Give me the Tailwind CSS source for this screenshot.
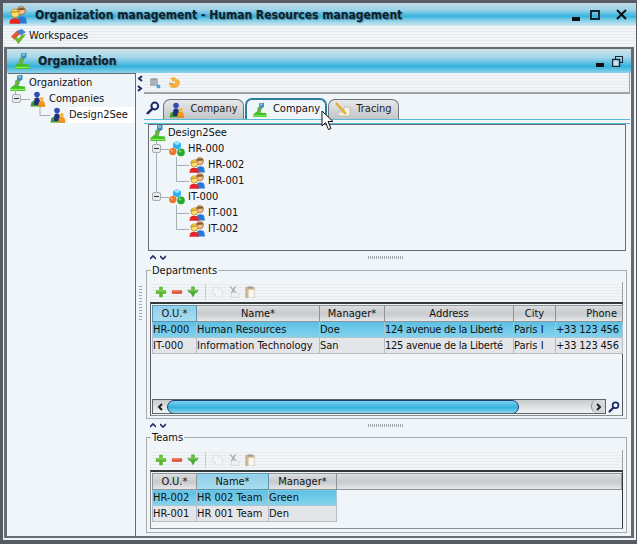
<!DOCTYPE html>
<html lang="en">
<head>
  <meta charset="UTF-8">
  <title>Organization management</title>
  <script src="https://cdn.jsdelivr.net/npm/@tailwindcss/browser@4"></script>
</head>
<body class="w-[637px] h-[544px] overflow-hidden bg-[#eef3f7] font-['DejaVu_Sans_Condensed','DejaVu_Sans',sans-serif] text-[11px] text-[#111]">

  <!-- icon sprites -->
  <svg width="0" height="0" class="absolute">
    <defs>
      <symbol id="org" viewBox="0 0 16 18">
        <path d="M0.5 14 L4 11 L7 11 L9 12 L15 12.5 L15.5 17 L0.5 17 Z" fill="#3fc02a"/>
        <path d="M1 15.5 L15 15.5" stroke="#8dea50" stroke-width="1.4"/>
        <path d="M4.5 12 L5.5 6 L9 5 L10 8 L8.5 12 Z" fill="#6bb04a"/>
        <path d="M7 1.5 L12.5 .8 L12.5 5.5 L9.5 7.5 L7 5.5 Z" fill="#3f8fb8"/>
        <path d="M8 2 L11 1.8 L11 3.6 L8.5 4 Z" fill="#8fc8e0"/>
      </symbol>
      <symbol id="comp" viewBox="0 0 16 16">
        <path d="M.5 15.5 L1.5 11 L5 9 L10 9 L10 15.5 Z" fill="#3f9c28"/>
        <circle cx="7" cy="3.6" r="2.8" fill="#2e4fb0"/>
        <path d="M4 14 L4.5 7.5 Q7 5.5 9.5 7.5 L9.5 14 Z" fill="#1f2f86"/>
        <path d="M8 15.5 L9 11 Q11.5 8.5 14.5 11 L15.5 15.5 Z" fill="#f39a1e"/>
        <circle cx="11.8" cy="8" r="2" fill="#f8b43c"/>
        <path d="M9 15 L15 15" stroke="#d8781a"/>
      </symbol>
      <symbol id="sph" viewBox="0 0 16 16">
        <path d="M8 .3 L12 2.3 L12 6.6 L8 8.6 L4 6.6 L4 2.3 Z" fill="#2fb6ee"/>
        <path d="M8 .8 L11 2.4 L8 4 L5 2.4 Z" fill="#a5e6fa"/>
        <circle cx="3.8" cy="10.6" r="3.7" fill="#ee7428"/>
        <circle cx="2.8" cy="9.4" r="1.2" fill="#f8b078"/>
        <circle cx="12" cy="11.4" r="3.8" fill="#26a834"/>
        <circle cx="11" cy="10.2" r="1.2" fill="#78d880"/>
      </symbol>
      <symbol id="team" viewBox="0 0 16 16">
        <circle cx="10.8" cy="4.2" r="3.6" fill="#eec08a" stroke="#8a5a2a" stroke-width=".7"/>
        <path d="M7.2 3 Q10.5 .2 14.3 2.6 L14.3 3.4 L7.4 4 Z" fill="#8a5526"/>
        <path d="M7 15.5 L8 10.5 Q11.5 8 15 10.5 L16 15.5 Z" fill="#2a78d4"/>
        <circle cx="5.4" cy="6.4" r="3.6" fill="#fbdc6e" stroke="#b98518" stroke-width=".7"/>
        <path d="M1.8 5.6 L9 4.8" stroke="#c98a18" stroke-width="1.1"/>
        <path d="M.3 15.7 L1.3 12 Q5 9.6 9 12 L10 15.7 Z" fill="#e42626"/>
      </symbol>
      <symbol id="plus" viewBox="0 0 14 14">
        <path d="M5 1 H9 V5 H13 V9 H9 V13 H5 V9 H1 V5 H5 Z" fill="#55b32f"/>
        <path d="M2 6 H12 M7 2 V6" stroke="#96dc68"/>
      </symbol>
      <symbol id="minus" viewBox="0 0 14 14">
        <rect x="1" y="5" width="12" height="4" rx="1" fill="#e0492e"/>
        <path d="M2 6 H12" stroke="#f59a80"/>
      </symbol>
      <symbol id="move" viewBox="0 0 14 14">
        <path d="M5 .5 H9 V4.5 H13.5 L12 8 H10 L7 13.5 L4 8 H2 L.5 4.5 H5 Z" fill="#4cab38"/>
        <path d="M2 5.5 H12 M7 1.5 V5" stroke="#8fd866"/>
      </symbol>
      <symbol id="copy" viewBox="0 0 14 14">
        <path d="M1.5 1.5 H8 L8 4 H10 L12 6 V13 H4 V10 H1.5 Z" fill="#f3f5f6" stroke="#d9dcdf"/>
      </symbol>
      <symbol id="cut" viewBox="0 0 14 14">
        <path d="M4 7 H10 L12.5 9 V13.5 H4 Z" fill="#eef0f2" stroke="#cfd4d7"/>
        <path d="M2.5 .5 L9 8 M9 .5 L4 8" stroke="#9fa5a9" stroke-width="1.3" fill="none"/>
      </symbol>
      <symbol id="paste" viewBox="0 0 14 14">
        <rect x="2" y="2" width="10" height="11.5" fill="#d8b68c" stroke="#c3b199"/>
        <rect x="5.5" y="4.5" width="6.5" height="9" fill="#f8f6f0" stroke="#e0dcd2"/>
        <rect x="4" y=".5" width="6" height="2.5" fill="#a79c8b"/>
      </symbol>
      <symbol id="lens" viewBox="0 0 14 14">
        <circle cx="8.8" cy="5" r="3.4" fill="none" stroke="#1d2a6b" stroke-width="2"/>
        <path d="M6.2 7.8 L1.8 12.2" stroke="#1d2a6b" stroke-width="2.6" stroke-linecap="round"/>
      </symbol>
    </defs>
  </svg>

  <div class="relative w-[637px] h-[544px] flex flex-col border-l-[3px] border-t-[3px] border-r border-b-4 border-[#565c61]">

    <!-- title bar -->
    <div class="h-[23px] shrink-0 flex items-center bg-[linear-gradient(#c3d9e2,#9dd3e7_30%,#35b3de_58%,#7bcbe6_72%,#d3e8f0)]">
      <svg class="w-[18px] h-[18px] ml-[6px] mr-[7px]"><use href="#team"/></svg>
      <span class="ml-[1px] font-bold text-[12px] text-[#0d2030] [text-shadow:1px_1px_1px_#4f8296]">Organization management - Human Resources management</span>
      <div class="ml-auto flex items-center gap-[10px] mr-[9px]">
        <span class="w-2 h-1 mt-2 bg-[#111]"></span>
        <span class="w-[10px] h-[10px] border-2 border-[#14263a]"></span>
        <svg class="w-[11px] h-[11px] ml-[6px]" viewBox="0 0 11 11"><path d="M1 1 L10 10 M10 1 L1 10" stroke="#111" stroke-width="2"/></svg>
      </div>
    </div>

    <!-- menu bar -->
    <div class="h-[21px] shrink-0 flex items-center bg-[repeating-linear-gradient(#f2f5f8_0,#f2f5f8_2px,#e6ebef_2px,#e6ebef_3px)]">
      <svg class="w-[17px] h-[17px] ml-[7px] mr-[2px]" viewBox="0 0 16 16">
        <path d="M1 8 L7 2 L10 5 L4 11 Z" fill="#e2582f"/>
        <path d="M6 3 L11 1 L15 4 L10 7 Z" fill="#4b7fd0"/>
        <path d="M4 10 L8 15 L15 6 L11 6 L8 10 L6 8 Z" fill="#6bbb38"/>
      </svg>
      <span>Workspaces</span>
    </div>

    <!-- internal frame -->
    <div class="ml-[1px] mr-[2px] mb-[2px] flex-1 min-h-0 flex flex-col border-x-[3px] border-t-2 border-b-2 border-[#666c71]">
      <div class="h-[24px] shrink-0 flex items-center bg-[linear-gradient(#cfe2ea,#a3d6e8_35%,#33b2dd_72%,#8ed2e9)]">
        <svg class="w-4 h-[18px] ml-[7px] mr-[8px]"><use href="#org"/></svg>
        <span class="font-bold text-[12px] text-[#0d2030] [text-shadow:1px_1px_1px_#4f8296]">Organization</span>
        <span class="ml-auto w-2 h-1 mt-2 bg-[#111]"></span>
        <svg class="w-[11px] h-[11px] ml-[8px] mr-[8px]" viewBox="0 0 11 11" fill="none" stroke="#14263a"><rect x="3.5" y=".5" width="7" height="6"/><rect x=".5" y="3.5" width="7" height="7" fill="#bfe3ef" stroke-width="1.4"/></svg>
      </div>

      <div class="flex-1 min-h-0 flex bg-[#f0f5f9]">

        <!-- left tree -->
        <div class="relative ml-[1px] w-[128px] shrink-0 border-t border-r border-[#666c71] pt-[1px]">
          <svg class="absolute left-0 top-0 w-[60px] h-[60px]" fill="none" stroke="#a9aeb2">
            <path d="M7.5 16 V21 M12 25.5 H22 M32 32 V41.5 H42"/>
          </svg>
          <div class="h-4 flex items-center pl-[2px]"><svg class="w-4 h-[18px] mr-[3px]"><use href="#org"/></svg>Organization</div>
          <div class="h-4 flex items-center pl-[22px] relative">
            <span class="absolute left-[4px] top-[3px] w-[9px] h-[9px] border border-[#a9aeb2] rounded-[2px] bg-[#e6eaed] flex items-center justify-center"><span class="w-[5px] h-px bg-[#333]"></span></span>
            <svg class="w-4 h-4 mr-[3px]"><use href="#comp"/></svg>Companies
          </div>
          <div class="h-4 flex items-center pl-[42px]"><svg class="w-4 h-4 mr-[2px]"><use href="#comp"/></svg><span class="bg-white pl-[1px] flex-1 h-4 leading-4">Design2See</span></div>
        </div>

        <!-- right side -->
        <div class="relative flex-1 min-w-0 flex flex-col">
          <!-- collapse handle -->
          <span class="absolute left-[3px] top-[213px] w-[3px] h-[35px] bg-[repeating-linear-gradient(#a3a9ad_0,#a3a9ad_1px,transparent_1px,transparent_3px)]"></span>

          <div class="h-[21px] shrink-0 flex items-center">
            <div class="w-[8px] h-full flex flex-col items-center justify-around">
              <svg class="w-[6px] h-[7px]" viewBox="0 0 6 7" fill="none" stroke="#1d2a6b" stroke-width="2"><path d="M5 1 L2 3.5 L5 6"/></svg>
              <svg class="w-[6px] h-[7px]" viewBox="0 0 6 7" fill="none" stroke="#1d2a6b" stroke-width="2"><path d="M1 1 L4 3.5 L1 6"/></svg>
            </div>
            <div class="flex-1 h-full mr-[1px] border-r border-b-2 border-[#9ea3a7] flex items-center gap-[7px] pl-[5px] bg-[repeating-linear-gradient(#f2f5f8_0,#f2f5f8_2px,#e6ebef_2px,#e6ebef_3px)]">
              <svg class="w-3 h-3" viewBox="0 0 12 12"><ellipse cx="5" cy="3" rx="4" ry="2" fill="#9aa3ab"/><rect x="1" y="3" width="8" height="6" fill="#aab2b9"/><circle cx="9.5" cy="9.5" r="2" fill="#4aa3d8"/></svg>
              <svg class="w-[13px] h-[13px]" viewBox="0 0 13 13"><path d="M2 2 L7 1 L8 3 Q12 3 12 7 Q11 12 6 12 Q1 12 1 7 L6 8 Q8 7 7 5 L5 6 Z" fill="#f5b13f"/><path d="M1 7 L6 8" stroke="#e8862a"/></svg>
            </div>
          </div>

          <!-- tabs -->
          <div class="h-[25px] shrink-0 flex items-end pl-[10px]">
            <svg class="w-[14px] h-[14px] mb-[4px] mr-[3px]"><use href="#lens"/></svg>
            <div class="w-[81px] h-[20px] flex items-center justify-center gap-[5px] border border-b-0 border-[#6c7378] rounded-t-[7px] bg-[linear-gradient(#e6e8ea,#c3c6c9)] text-[#222]"><svg class="w-4 h-4"><use href="#comp"/></svg>Company</div>
            <div class="w-[82px] h-[21px] ml-[1px] flex items-center justify-center gap-[5px] border-2 border-b-0 border-[#2f7f9c] rounded-t-[7px] bg-[#f0f5f9]"><svg class="w-4 h-4"><use href="#org"/></svg>Company</div>
            <div class="w-[71px] h-[20px] ml-[1px] flex items-center justify-center gap-[5px] border border-b-0 border-[#6c7378] rounded-t-[7px] bg-[linear-gradient(#e6e8ea,#c3c6c9)] text-[#222]">
              <svg class="w-4 h-4" viewBox="0 0 16 16"><path d="M3 14 L15 14 L15 5 L9 5 L9 10 L3 10 Z" fill="#f4f1e4" stroke="#b5b09c" stroke-width=".7"/><path d="M1 1 L11 12" stroke="#e5a92f" stroke-width="2.2"/></svg>Tracing
            </div>
          </div>

          <!-- tab pane -->
          <div class="ml-[8px] mr-[1px] h-[5px] shrink-0 border-t border-b border-[#58bcd9]"></div>
          <div class="ml-[12px] mr-[5px] h-[127px] shrink-0 relative border border-[#666c71]">
            <svg class="absolute left-0 top-0 w-[60px] h-[110px]" fill="none" stroke="#a9aeb2">
              <path d="M7.5 16 V68 M12 24.5 H20 M27.5 32 V56.5 H40 M27.5 40.5 H40 M12 72.5 H20 M27.5 80 V104.5 H40 M27.5 88.5 H40"/>
            </svg>
            <div class="h-4 flex items-center pl-[1px]"><svg class="w-4 h-[18px] mr-[2px]"><use href="#org"/></svg>Design2See</div>
            <div class="h-4 flex items-center pl-[20px] relative">
              <span class="absolute left-[3px] top-[3px] w-[9px] h-[9px] border border-[#a9aeb2] rounded-[2px] bg-[#e6eaed] flex items-center justify-center"><span class="w-[5px] h-px bg-[#333]"></span></span>
              <svg class="w-4 h-4 mr-[3px]"><use href="#sph"/></svg>HR-000
            </div>
            <div class="h-4 flex items-center pl-[40px]"><svg class="w-4 h-4 mr-[3px]"><use href="#team"/></svg>HR-002</div>
            <div class="h-4 flex items-center pl-[40px]"><svg class="w-4 h-4 mr-[3px]"><use href="#team"/></svg>HR-001</div>
            <div class="h-4 flex items-center pl-[20px] relative">
              <span class="absolute left-[3px] top-[3px] w-[9px] h-[9px] border border-[#a9aeb2] rounded-[2px] bg-[#e6eaed] flex items-center justify-center"><span class="w-[5px] h-px bg-[#333]"></span></span>
              <svg class="w-4 h-4 mr-[3px]"><use href="#sph"/></svg>IT-000
            </div>
            <div class="h-4 flex items-center pl-[40px]"><svg class="w-4 h-4 mr-[3px]"><use href="#team"/></svg>IT-001</div>
            <div class="h-4 flex items-center pl-[40px]"><svg class="w-4 h-4 mr-[3px]"><use href="#team"/></svg>IT-002</div>
          </div>

          <!-- splitter -->
          <div class="h-[13px] shrink-0 relative flex items-center pl-[14px] gap-[4px]">
            <svg class="w-[6px] h-[5px]" viewBox="0 0 6 5" fill="none" stroke="#1d2a6b" stroke-width="1.6"><path d="M0 4 L3 1 L6 4"/></svg>
            <svg class="w-[6px] h-[5px]" viewBox="0 0 6 5" fill="none" stroke="#1d2a6b" stroke-width="1.6"><path d="M0 1 L3 4 L6 1"/></svg>
            <span class="absolute left-[232px] top-[5px] w-[35px] h-[3px] bg-[repeating-linear-gradient(90deg,#a3a9ad_0,#a3a9ad_1px,transparent_1px,transparent_2px)]"></span>
          </div>

          <!-- departments -->
          <fieldset class="ml-[10px] mr-[4px] h-[155px] shrink-0 border border-[#a6abaf] px-[3px] min-w-0">
            <legend class="ml-[1px] px-[1px] leading-[13px]">Departments</legend>
            <div class="h-[20px] mt-[5px] flex items-center gap-[3px] pl-[5px] border-r border-[#9ea3a7] bg-[repeating-linear-gradient(#f2f5f8_0,#f2f5f8_2px,#e6ebef_2px,#e6ebef_3px)]">
              <svg class="w-3 h-3"><use href="#plus"/></svg>
              <svg class="w-3 h-3 ml-[1px]"><use href="#minus"/></svg>
              <svg class="w-3 h-3 ml-[1px]"><use href="#move"/></svg>
              <span class="w-px h-4 bg-[#c8ccd0] mx-[3px]"></span>
              <svg class="w-3 h-3"><use href="#copy"/></svg>
              <svg class="w-3 h-3 ml-[1px]"><use href="#cut"/></svg>
              <svg class="w-3 h-3 ml-[1px]"><use href="#paste"/></svg>
            </div>
            <div class="h-[114px] border border-t-2 border-[#555b60] border-t-[#33383c] border-b-[#888e92] pt-[1px] pl-[1px] flex flex-col">
              <table class="table-fixed border-collapse w-[470px] shrink-0 leading-[13px]">
                <colgroup><col class="w-[44px]"><col class="w-[123px]"><col class="w-[65px]"><col class="w-[129px]"><col class="w-[42px]"><col class="w-[67px]"></colgroup>
                <thead>
                  <tr class="h-[16px] text-center">
                    <th class="font-normal border border-[#5e93ad] bg-[linear-gradient(#8fcfe9,#a9ddf0)]">O.U.*</th>
                    <th class="font-normal border border-[#8f9497] bg-[linear-gradient(#d8dadd,#c8cbce_50%,#e7e9eb)]">Name*</th>
                    <th class="font-normal border border-[#8f9497] bg-[linear-gradient(#d8dadd,#c8cbce_50%,#e7e9eb)]">Manager*</th>
                    <th class="font-normal border border-[#8f9497] bg-[linear-gradient(#d8dadd,#c8cbce_50%,#e7e9eb)]">Address</th>
                    <th class="font-normal border border-[#8f9497] bg-[linear-gradient(#d8dadd,#c8cbce_50%,#e7e9eb)]">City</th>
                    <th class="font-normal border border-[#8f9497] bg-[linear-gradient(#d8dadd,#c8cbce_50%,#e7e9eb)] text-right pr-[5px]">Phone</th>
                  </tr>
                </thead>
                <tbody>
                  <tr class="h-[16px] bg-[linear-gradient(#5cc0e4,#86d3ec)] whitespace-nowrap">
                    <td class="border border-[#a9c6d2] overflow-hidden">HR-000</td>
                    <td class="border border-[#a9c6d2] overflow-hidden">Human Resources</td>
                    <td class="border border-[#a9c6d2] overflow-hidden">Doe</td>
                    <td class="border border-[#a9c6d2] overflow-hidden tracking-[-0.25px]">124 avenue de la Liberté</td>
                    <td class="border border-[#a9c6d2] overflow-hidden">Paris I</td>
                    <td class="border border-[#a9c6d2] overflow-hidden tracking-[-0.2px]">+33 123 456</td>
                  </tr>
                  <tr class="h-[16px] bg-[#e3e5e9] whitespace-nowrap">
                    <td class="border border-[#b7bcc1] overflow-hidden">IT-000</td>
                    <td class="border border-[#b7bcc1] overflow-hidden">Information Technology</td>
                    <td class="border border-[#b7bcc1] overflow-hidden">San</td>
                    <td class="border border-[#b7bcc1] overflow-hidden tracking-[-0.25px]">125 avenue de la Liberté</td>
                    <td class="border border-[#b7bcc1] overflow-hidden">Paris I</td>
                    <td class="border border-[#b7bcc1] overflow-hidden tracking-[-0.2px]">+33 123 456</td>
                  </tr>
                </tbody>
              </table>
              <!-- scrollbar -->
              <div class="mt-auto mb-px flex items-center h-[15px]">
                <div class="w-[454px] h-[15px] flex items-center border border-[#5e6468] bg-[linear-gradient(#c8cacc,#f2f3f4)] overflow-hidden">
                  <span class="w-[14px] h-full flex items-center justify-center"><svg class="w-[6px] h-[8px]" viewBox="0 0 6 8" fill="none" stroke="#222" stroke-width="2"><path d="M5 1 L2 4 L5 7"/></svg></span>
                  <span class="w-[352px] h-[14px] rounded-[7px] border border-[#17407a] bg-[linear-gradient(#7ad0ec,#35b3de_55%,#8ad7ef)]"></span>
                  <span class="ml-auto w-[14px] h-full border-l border-[#8f9497] rounded-l-[6px] flex items-center justify-center bg-[#d5d7d9]"><svg class="w-[6px] h-[8px]" viewBox="0 0 6 8" fill="none" stroke="#222" stroke-width="2"><path d="M1 1 L4 4 L1 7"/></svg></span>
                </div>
                <svg class="w-3 h-3 ml-[2px]"><use href="#lens"/></svg>
              </div>
            </div>
          </fieldset>

          <!-- splitter -->
          <div class="h-[12px] shrink-0 relative flex items-center pl-[14px] gap-[4px]">
            <svg class="w-[6px] h-[5px]" viewBox="0 0 6 5" fill="none" stroke="#1d2a6b" stroke-width="1.6"><path d="M0 4 L3 1 L6 4"/></svg>
            <svg class="w-[6px] h-[5px]" viewBox="0 0 6 5" fill="none" stroke="#1d2a6b" stroke-width="1.6"><path d="M0 1 L3 4 L6 1"/></svg>
            <span class="absolute left-[232px] top-[5px] w-[35px] h-[3px] bg-[repeating-linear-gradient(90deg,#a3a9ad_0,#a3a9ad_1px,transparent_1px,transparent_2px)]"></span>
          </div>

          <!-- teams -->
          <fieldset class="ml-[10px] mr-[4px] h-[102px] shrink-0 border border-[#a6abaf] px-[3px] min-w-0">
            <legend class="ml-[1px] px-[1px] leading-[13px]">Teams</legend>
            <div class="h-[20px] mt-[6px] flex items-center gap-[3px] pl-[5px] border-r border-[#9ea3a7] bg-[repeating-linear-gradient(#f2f5f8_0,#f2f5f8_2px,#e6ebef_2px,#e6ebef_3px)]">
              <svg class="w-3 h-3"><use href="#plus"/></svg>
              <svg class="w-3 h-3 ml-[1px]"><use href="#minus"/></svg>
              <svg class="w-3 h-3 ml-[1px]"><use href="#move"/></svg>
              <span class="w-px h-4 bg-[#c8ccd0] mx-[3px]"></span>
              <svg class="w-3 h-3"><use href="#copy"/></svg>
              <svg class="w-3 h-3 ml-[1px]"><use href="#cut"/></svg>
              <svg class="w-3 h-3 ml-[1px]"><use href="#paste"/></svg>
            </div>
            <div class="h-[59px] border border-t-2 border-[#888e92] border-t-[#33383c] border-r-[#33383c] pt-[1px] pl-[1px]">
              <table class="table-fixed border-collapse w-[470px] leading-[13px]">
                <colgroup><col class="w-[44px]"><col class="w-[72px]"><col class="w-[68px]"><col></colgroup>
                <thead>
                  <tr class="h-[16px] text-center">
                    <th class="font-normal border border-[#8f9497] bg-[linear-gradient(#d8dadd,#c8cbce_50%,#e7e9eb)]">O.U.*</th>
                    <th class="font-normal border border-[#5e93ad] bg-[linear-gradient(#8fcfe9,#a9ddf0)]">Name*</th>
                    <th class="font-normal border border-[#8f9497] bg-[linear-gradient(#d8dadd,#c8cbce_50%,#e7e9eb)]">Manager*</th>
                    <th class="font-normal border border-[#8f9497] bg-[linear-gradient(#d8dadd,#c8cbce_50%,#e7e9eb)]"></th>
                  </tr>
                </thead>
                <tbody>
                  <tr class="h-[16px] whitespace-nowrap">
                    <td class="border border-[#a9c6d2] bg-[linear-gradient(#5cc0e4,#86d3ec)]">HR-002</td>
                    <td class="border border-[#a9c6d2] bg-[linear-gradient(#5cc0e4,#86d3ec)]">HR 002 Team</td>
                    <td class="border border-[#a9c6d2] bg-[linear-gradient(#5cc0e4,#86d3ec)]">Green</td>
                    <td></td>
                  </tr>
                  <tr class="h-[16px] whitespace-nowrap">
                    <td class="border border-[#b7bcc1] bg-[#e3e5e9]">HR-001</td>
                    <td class="border border-[#b7bcc1] bg-[#e3e5e9]">HR 001 Team</td>
                    <td class="border border-[#b7bcc1] bg-[#e3e5e9]">Den</td>
                    <td></td>
                  </tr>
                </tbody>
              </table>
            </div>
          </fieldset>
        </div>
      </div>
    </div>

    <!-- mouse cursor -->
    <svg class="absolute left-[318px] top-[107px] w-[13px] h-[21px]" viewBox="0 0 13 21">
      <path d="M1 1 L1 16 L4.5 12.5 L7.5 19.5 L10 18.5 L7 11.5 L12 11.5 Z" fill="#fff" stroke="#111" stroke-width="1"/>
    </svg>
  </div>
</body>
</html>
